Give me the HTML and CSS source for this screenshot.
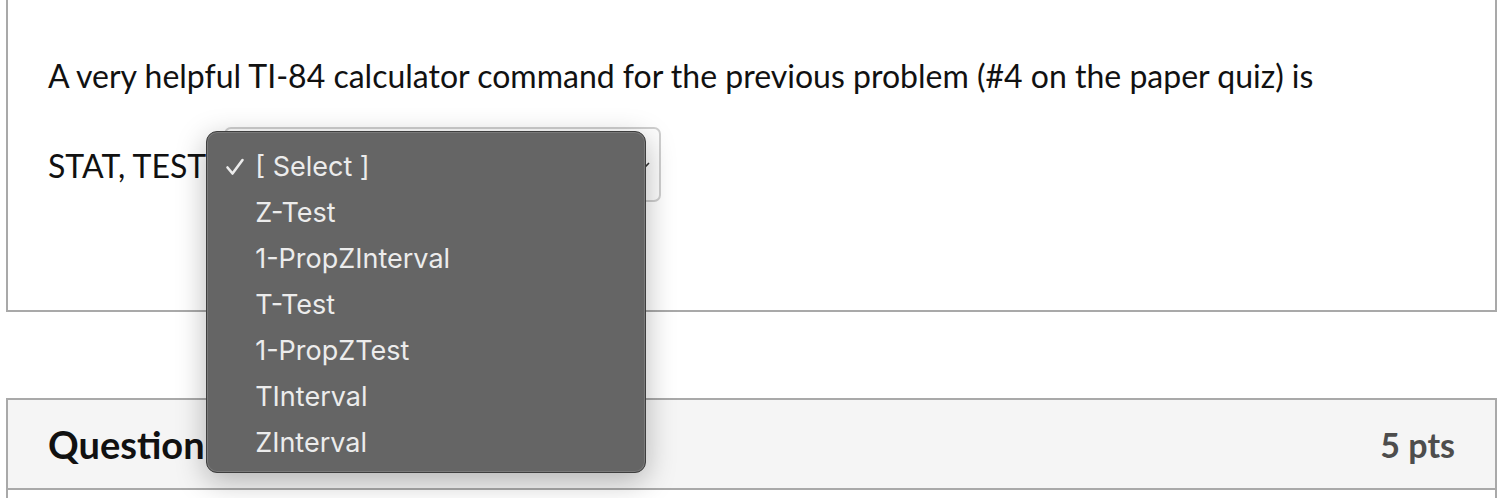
FILE: index.html
```html
<!DOCTYPE html>
<html>
<head>
<meta charset="utf-8">
<link rel="stylesheet" href="styles.css">
</head>
<body>
<div class="page">
  <div class="card card-top">
    <p class="prompt">A very helpful TI-84 calculator command for the previous problem (#4 on the paper quiz) is</p>
    <div class="answer-row">
      <span class="label">STAT, TEST</span>
      <div class="select-wrap">
        <div class="select">
          <svg class="chev" width="14" height="10" viewBox="0 0 14 10"><path d="M2 3 L7 8 L12 3" fill="none" stroke="#333" stroke-width="1.6"/></svg>
        </div>
        <ul class="menu">
          <li class="item selected"><svg class="check" width="20" height="18" viewBox="0 0 20 18"><path d="M2.5 9.5 L7.5 15.5 L17.5 2" fill="none" stroke="#ececec" stroke-width="2.6" stroke-linecap="round" stroke-linejoin="round"/></svg>[ Select ]</li>
          <li class="item">Z-Test</li>
          <li class="item">1-PropZInterval</li>
          <li class="item">T-Test</li>
          <li class="item">1-PropZTest</li>
          <li class="item">TInterval</li>
          <li class="item">ZInterval</li>
        </ul>
      </div>
    </div>
  </div>
  <div class="card card-bottom">
    <div class="q-header">
      <span class="q-title">Question</span>
      <span class="q-pts">5 pts</span>
    </div>
  </div>
</div>
</body>
</html>
```

FILE: styles.css
```css
html, body {
  margin: 0;
  padding: 0;
  background: #ffffff;
}
body {
  font-family: Lato, "Liberation Sans", sans-serif;
  color: #111;
  height: 498px;
  overflow: hidden;
}
.page {
  padding-left: 6px;
  width: 1491px;
}
.card {
  border: 2px solid #a9a9a9;
  box-sizing: border-box;
}
.card-top {
  border-top: none;
  padding: 55px 40px 108px 40px;
}
.prompt {
  margin: 0;
  font-size: 32px;
  line-height: 42px;
  white-space: nowrap;
}
.answer-row {
  display: flex;
  align-items: center;
  margin-top: 30px;
}
.label {
  font-size: 32px;
  line-height: 42px;
  padding-top: 2px;
  white-space: nowrap;
}
.select-wrap {
  position: relative;
  margin-left: 18px;
}
.select {
  width: 437px;
  height: 75px;
  box-sizing: border-box;
  border: 2px solid #cfcfcf;
  border-radius: 7px;
  background: #fdfdfd;
  display: flex;
  align-items: center;
  justify-content: flex-end;
  padding-right: 8px;
}
.menu {
  position: absolute;
  left: -18px;
  top: 4px;
  width: 440px;
  height: 342px;
  box-sizing: border-box;
  margin: 0;
  padding: 12px 0 0 0;
  list-style: none;
  background: #656565;
  border: 1px solid #3e3e3e;
  border-radius: 11px;
  box-shadow: inset 0 0 0 1px #7a7a7a, 0 8px 30px rgba(0,0,0,0.28);
  font-family: Inter, "Noto Sans", sans-serif;
  font-size: 27px;
  color: #ececec;
}
.item {
  height: 46px;
  line-height: 46px;
  padding-left: 48px;
  position: relative;
  white-space: nowrap;
}
.check {
  position: absolute;
  left: 18px;
  top: 14px;
}
.card-bottom {
  margin-top: 86px;
  border-bottom: none;
  height: 100px;
}
.q-header {
  background: #f5f5f5;
  height: 88px;
  border-bottom: 2px solid #a9a9a9;
  display: flex;
  align-items: center;
  justify-content: space-between;
  padding: 0 40px;
}
.q-title {
  font-weight: 700;
  font-size: 38px;
  color: #111;
}
.q-pts {
  font-weight: 700;
  font-size: 34px;
  color: #4d4d4d;
}
```
